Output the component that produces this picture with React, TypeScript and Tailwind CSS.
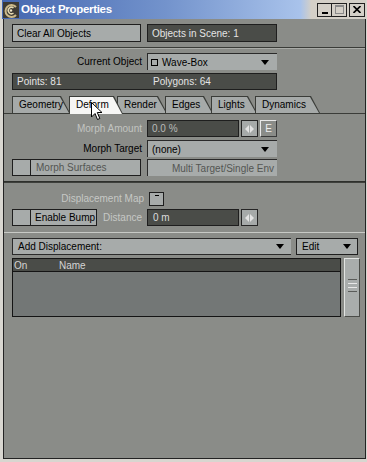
import React from 'react';

const DropArrow = () => (
  <span className="ml-auto flex items-center">
    <span className="w-0 h-0 border-x-[4px] border-x-transparent border-t-[5px] border-t-black" />
  </span>
);

const Spinner = () => (
  <div className="w-[17px] h-[17px] bg-[#a6aaa9] border border-[#262626] flex items-center justify-center gap-[1px]">
    <span className="w-0 h-0 border-y-[4px] border-y-transparent border-r-[4px] border-r-[#e4e4e4]" />
    <span className="w-0 h-0 border-y-[4px] border-y-transparent border-l-[4px] border-l-[#e4e4e4]" />
  </div>
);

const tabs = [
  { label: 'Geometry', cls: 'w-[58px]' },
  { label: 'Deform', cls: 'w-[54px] -ml-[1px]', active: true },
  { label: 'Render', cls: 'w-[50px] -ml-[6px]' },
  { label: 'Edges', cls: 'w-[48px] -ml-[2px]' },
  { label: 'Lights', cls: 'w-[46px] -ml-[2px]' },
  { label: 'Dynamics', cls: 'w-[65px] -ml-[2px]' },
];

const clip = '[clip-path:polygon(0_0,calc(100%_-_9px)_0,100%_100%,0_100%)]';

const Tab = ({ label, cls, active }: { label: string; cls: string; active?: boolean }) => (
  <div
    className={`relative shrink-0 ${cls} ${clip} bg-[#3a3c38] ${
      active ? 'h-[18px] -mb-[1px] z-10' : 'h-[17px]'
    }`}
  >
    <div
      className={`absolute left-[1px] right-[1px] top-[1px] bottom-0 ${clip} ${
        active ? 'bg-[#f6f6f4]' : 'bg-[#a6aaa9]'
      }`}
    />
    <span className="relative block pl-[7px] leading-[17px] text-[10px] text-black">{label}</span>
  </div>
);

const App = () => {
  return (
    <div className="relative w-[367px] h-[462px] bg-[#d8d6d0] pl-[3px] pr-[1px] pb-[3px] flex flex-col font-['Liberation_Sans',Arial,sans-serif] text-[10px] select-none overflow-hidden">
      {/* Title bar */}
      <div className="-ml-[1px] h-[19px] shrink-0 flex items-center bg-[linear-gradient(to_right,#4467b0_0%,#7393cc_45%,#a9c3eb_82%,#d4d0c8_85%)]">
        <svg width="16" height="16" viewBox="0 0 16 16" className="ml-[1px]">
          <rect width="16" height="16" fill="#3d3a33" />
          <path d="M13 13 A6 6 0 1 1 13 5" stroke="#cbb98a" strokeWidth="2" fill="none" />
          <path d="M10.5 11 A3.2 3.2 0 1 1 10.5 6" stroke="#e6d9b0" strokeWidth="1.5" fill="none" />
          <circle cx="8" cy="8.5" r="1.2" fill="#f0e6c8" />
        </svg>
        <span className="ml-[2px] text-white font-bold text-[11.5px] tracking-[-0.3px]">Object Properties</span>
        <div className="ml-auto mr-[1px] flex items-center">
          <div className="w-[15px] h-[14px] bg-[#d4d0c8] border border-[#202020] flex items-end justify-center pb-[2px]">
            <span className="w-[6px] h-[2px] bg-black" />
          </div>
          <div className="w-[15px] h-[14px] bg-[#d4d0c8] border border-[#202020] border-l-0 flex items-center justify-center">
            <span className="w-[9px] h-[9px] border border-[#8a8a8a] border-t-2" />
          </div>
          <div className="ml-[2px] w-[16px] h-[14px] bg-[#d4d0c8] border border-[#202020] flex items-center justify-center">
            <svg width="8" height="7" viewBox="0 0 8 7">
              <path d="M0.5 0 L7.5 7 M7.5 0 L0.5 7" stroke="black" strokeWidth="1.6" />
            </svg>
          </div>
        </div>
      </div>

      {/* Body */}
      <div className="flex-1 bg-[#8a8c88] border-x border-b border-[#232323] flex flex-col">
        {/* Row 1 */}
        <div className="mt-[5px] pl-[8px] flex">
          <div className="w-[129px] h-[18px] bg-[#a7abaa] border border-[#1e1e1e] flex items-center pl-[4px] text-black">
            Clear All Objects
          </div>
          <div className="ml-[6px] w-[130px] h-[18px] bg-[#4a4c48] border border-[#1e1e1e] flex items-center pl-[4px] text-[#e4e4e4]">
            Objects in Scene: 1
          </div>
        </div>

        <div className="mt-[5px] h-[1px] bg-[#3a3c38]" />
        <div className="h-[1px] bg-[#a9aba7]" />

        {/* Current object */}
        <div className="mt-[4px] pl-[8px] flex items-center">
          <div className="w-[135px] pr-[5px] text-right text-black">Current Object</div>
          <div className="w-[130px] h-[17px] bg-[#a7abaa] border-t border-l border-[#2a2a2a] flex items-center pl-[3px] pr-[8px] text-black">
            <span className="w-[7px] h-[7px] border border-black mr-[4px] shrink-0" />
            <span>Wave-Box</span>
            <DropArrow />
          </div>
        </div>

        {/* Points */}
        <div className="mt-[3px] pl-[8px] flex">
          <div className="w-[265px] h-[17px] bg-[#4a4c48] border border-[#1e1e1e] flex items-center pl-[4px] text-[#e4e4e4]">
            <span className="w-[136px]">Points: 81</span>
            <span>Polygons: 64</span>
          </div>
        </div>

        {/* Tabs */}
        <div className="mt-[6px] relative">
          <div className="pl-[8px] flex items-start">
            {tabs.map((t) => (
              <Tab key={t.label} label={t.label} cls={t.cls} active={t.active} />
            ))}
          </div>
          <div className="h-[1px] bg-[#3a3c38]" />
        </div>

        {/* Morph Amount */}
        <div className="mt-[6px] pl-[8px] flex items-center">
          <div className="w-[135px] pr-[5px] text-right text-[#c2c4c1]">Morph Amount</div>
          <div className="w-[92px] h-[17px] bg-[#4a4c48] border border-[#1e1e1e] flex items-center pl-[4px] text-[#b9bbb8]">
            0.0 %
          </div>
          <div className="ml-[2px]">
            <Spinner />
          </div>
          <div className="ml-[2px] w-[17px] h-[17px] bg-[#8a8c88] border border-[#e8e8e8] border-r-[#3a3a3a] border-b-[#3a3a3a] flex items-center justify-center text-[#f0f0f0]">
            E
          </div>
        </div>

        {/* Morph Target */}
        <div className="mt-[3px] pl-[8px] flex items-center">
          <div className="w-[135px] pr-[5px] text-right text-black">Morph Target</div>
          <div className="w-[130px] h-[17px] bg-[#a7abaa] border-t border-l border-[#2a2a2a] flex items-center pl-[4px] pr-[8px] text-black">
            <span>(none)</span>
            <DropArrow />
          </div>
        </div>

        {/* Morph Surfaces */}
        <div className="mt-[2px] pl-[8px] flex">
          <div className="w-[129px] h-[17px] bg-[#a7abaa] border border-[#1e1e1e] flex items-center text-[#545653]">
            <span className="w-[18px] h-full border-r border-[#1e1e1e]" />
            <span className="pl-[5px]">Morph Surfaces</span>
          </div>
          <div className="ml-[6px] w-[130px] h-[17px] bg-[#a7abaa] border-t border-l border-[#2a2a2a] flex items-center justify-end pr-[3px] text-[#545653]">
            Multi Target/Single Env
          </div>
        </div>

        <div className="mt-[5px] h-[1px] bg-[#2e302c]" />
        <div className="h-[1px] bg-[#3e403c]" />

        {/* Displacement Map */}
        <div className="mt-[8px] pl-[8px] flex items-center">
          <div className="w-[137px] pr-[5px] text-right text-[#c6c8c5]">Displacement Map</div>
          <div className="w-[15px] h-[14px] bg-[#a7abaa] border border-[#1e1e1e] flex justify-center pt-[2px]">
            <span className="w-[4px] h-[1px] bg-black" />
          </div>
        </div>

        {/* Enable Bump */}
        <div className="mt-[3px] pl-[8px] flex items-center">
          <div className="w-[85px] h-[17px] bg-[#a7abaa] border border-[#1e1e1e] flex items-center text-black">
            <span className="w-[18px] h-full border-r border-[#1e1e1e]" />
            <span className="pl-[4px]">Enable Bump</span>
          </div>
          <div className="w-[50px] pr-[5px] text-right text-[#c6c8c5]">Distance</div>
          <div className="w-[92px] h-[17px] bg-[#4a4c48] border border-[#1e1e1e] flex items-center pl-[5px] text-[#dcdcdc]">
            0 m
          </div>
          <div className="ml-[2px]">
            <Spinner />
          </div>
        </div>

        <div className="mt-[6px] h-[1px] bg-[#c8cac6]" />

        {/* Add Displacement */}
        <div className="mt-[5px] pl-[8px] flex items-center">
          <div className="w-[279px] h-[17px] bg-[#a7abaa] border-t border-l border-b border-[#2a2a2a] flex items-center pl-[5px] pr-[7px] text-black">
            <span>Add Displacement:</span>
            <DropArrow />
          </div>
          <div className="ml-[5px] w-[62px] h-[17px] bg-[#a7abaa] border border-[#1e1e1e] flex items-center pl-[5px] pr-[6px] text-black">
            <span>Edit</span>
            <DropArrow />
          </div>
        </div>

        {/* List */}
        <div className="mt-[3px] pl-[8px] flex items-start">
          <div className="w-[329px] h-[59px] bg-[#737776] border border-[#141414] flex flex-col">
            <div className="h-[13px] bg-[#4a4c48] border-b border-[#141414] flex items-center text-[#d4d4d4]">
              <span className="w-[46px] pl-[1px]">On</span>
              <span>Name</span>
            </div>
          </div>
          <div className="ml-[3px] w-[16px] h-[59px] bg-[#a9adac] border border-[#e2e4e2] border-r-[#4a4c48] border-b-[#4a4c48] flex flex-col items-center pt-[20px] gap-[3px]">
            <span className="w-[9px] h-[1px] bg-[#5a5c5a]" />
            <span className="w-[9px] h-[1px] bg-[#e8e8e8]" />
            <span className="w-[9px] h-[1px] bg-[#e8e8e8]" />
            <span className="w-[9px] h-[1px] bg-[#5a5c5a]" />
          </div>
        </div>
      </div>

      {/* Mouse cursor */}
      <svg width="12" height="19" viewBox="0 0 12 19" className="absolute left-[91px] top-[102px] z-20">
        <path
          d="M0.5 0.5 L0.5 15 L4 11.5 L6.5 17.5 L8.8 16.5 L6.3 10.5 L11 10.5 Z"
          fill="white"
          stroke="black"
          strokeWidth="1"
        />
      </svg>
    </div>
  );
};

export default App;
